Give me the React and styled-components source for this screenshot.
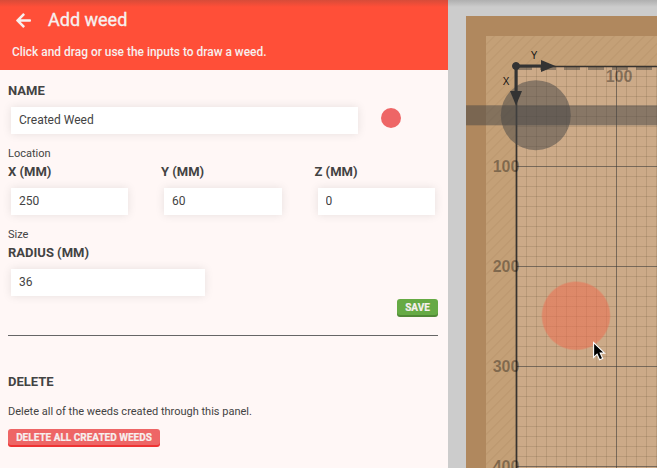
import React from "react";
import styled, { createGlobalStyle, css } from "styled-components";
import { FaArrowLeft } from "react-icons/fa";

const GlobalStyle = createGlobalStyle`
  *, *::before, *::after { box-sizing: border-box; }
  body {
    margin: 0;
    overflow: hidden;
    background: #cccccc;
    color: #434343;
    font-family: Roboto, "Liberation Sans", sans-serif;
  }
`;

const Page = styled.div`
  position: relative;
  display: flex;
  width: 657px;
  height: 468px;
  overflow: hidden;
  background: #cccccc;
`;

const TopShade = styled.div`
  position: absolute;
  inset: 0 0 auto 0;
  height: 7px;
  background: linear-gradient(rgba(60, 60, 60, 0.2), rgba(60, 60, 60, 0));
`;

const Panel = styled.section`
  display: flex;
  flex-direction: column;
  flex: 0 0 448px;
  height: 468px;
  background: #fff7f6;
`;

const PanelHeader = styled.header`
  flex: 0 0 70px;
  background: #ff4f38;
  color: #f7f0ef;
`;

const TitleRow = styled.div`
  display: flex;
  align-items: center;
  gap: 16px;
  height: 40px;
  padding-left: 15px;
`;

const BackArrow = styled(FaArrowLeft)`
  width: 17px;
  height: 17px;
`;

const Title = styled.h1`
  margin: 0;
  font-size: 18px;
  font-weight: 400;
  line-height: 24px;
  -webkit-text-stroke: 0.35px currentColor;
`;

const Hint = styled.p`
  margin: 4px 0 0 12px;
  font-size: 11.93px;
  font-weight: 500;
  line-height: 16px;
`;

const PanelBody = styled.div`
  display: flex;
  flex-direction: column;
  padding: 12px 10px 0 8px;
`;

const Label = styled.label`
  display: block;
  font-size: 13px;
  font-weight: 700;
  line-height: 18px;
  text-transform: uppercase;
`;

const GroupName = styled.span`
  display: block;
  height: 16px;
  margin-top: 12px;
  font-size: 11px;
  line-height: 16px;
`;

const Input = styled.input`
  display: block;
  width: ${(p) => p.$width}px;
  height: 27px;
  margin: 7px 0 0 3px;
  padding: 0 8px;
  border: 0;
  border-radius: 0;
  outline: 0;
  background: #fff;
  box-shadow: 0 0 10px rgba(0, 0, 0, 0.1);
  color: #434343;
  font: 400 12px/27px Roboto, "Liberation Sans", sans-serif;
`;

const NameRow = styled.div`
  display: flex;
  align-items: center;
  gap: 23px;
`;

const ColorDot = styled.span`
  width: 20px;
  height: 20px;
  margin-top: 1px;
  border-radius: 50%;
  background: #ee6666;
`;

const Columns = styled.div`
  display: grid;
  grid-template-columns: 153px 153.5px 1fr;
  margin-top: 1px;
`;

const Field = styled.div`
  margin-top: ${(p) => p.$top || 0}px;
`;

const buttonColors = {
  green: css`
    background: #66aa44;
    box-shadow: 0 2px 0 0 #518836;
  `,
  red: css`
    background: #ee6666;
    box-shadow: 0 2px 0 0 #ee3333;
  `,
};

const Button = styled.button`
  align-self: ${(p) => (p.$end ? "flex-end" : "flex-start")};
  width: ${(p) => p.$width}px;
  height: 16px;
  padding: 0;
  border: 0;
  border-radius: 3px;
  ${(p) => buttonColors[p.$color]}
  color: #f7f0ef;
  font: 700 10px/15px Roboto, "Liberation Sans", sans-serif;
  -webkit-text-stroke: 0.2px currentColor;
  text-transform: uppercase;
  white-space: nowrap;
`;

const SaveRow = styled.div`
  display: flex;
  flex-direction: column;
  margin-top: 3px;
`;

const Divider = styled.hr`
  width: 100%;
  height: 1px;
  margin: 20px 0 37px;
  border: 0;
  background: #666;
`;

const Description = styled.p`
  margin: 13px 0 9px;
  font-size: 11px;
  line-height: 16px;
`;

const MapArea = styled.main`
  flex: 1;
  padding: 16px 0 0 18px;
`;

const MapDrawing = styled.svg`
  display: block;
`;

const range = (from, to, step) => {
  const values = [];
  for (let v = from; v < to; v += step) values.push(v);
  return values;
};

function FarmMap() {
  const minorX = range(526.5, 657, 10).filter((x) => x !== 616.5);
  const minorY = range(76.5, 468, 10).filter((y) => (y - 66.5) % 100 !== 0);
  return (
    <MapDrawing width="191" height="452" viewBox="466 16 191 452">
      <defs>
        <pattern
          id="hatch"
          width="7.07"
          height="7.07"
          patternUnits="userSpaceOnUse"
          patternTransform="rotate(45)"
        >
          <rect width="1" height="7.07" fill="#6b4a20" fillOpacity="0.1" />
        </pattern>
        <radialGradient id="weed">
          <stop offset="0.95" stopColor="#ee6a4c" stopOpacity="0.52" />
          <stop offset="1" stopColor="#ee6a4c" stopOpacity="0" />
        </radialGradient>
      </defs>
      <rect x="466" y="16" width="191" height="452" fill="#b0885e" />
      <rect x="486" y="36" width="171" height="432" fill="#c4a077" />
      <rect x="486" y="36" width="171" height="432" fill="url(#hatch)" />
      <rect x="516" y="66" width="141" height="402" fill="#ccaa88" />
      <g stroke="#3d2f1c" strokeOpacity="0.14">
        {minorX.map((x) => (
          <path key={x} d={`M${x} 67V468`} />
        ))}
        {minorY.map((y) => (
          <path key={y} d={`M517 ${y}H657`} />
        ))}
      </g>
      <g stroke="#333" strokeOpacity="0.55">
        <path d="M616.5 67V468" />
        {[166.5, 266.5, 366.5, 466.5].map((y) => (
          <path key={y} d={`M517 ${y}H657`} />
        ))}
      </g>
      <path
        d="M516 68.5H657"
        stroke="#333"
        strokeOpacity="0.4"
        strokeWidth="3"
        strokeDasharray="16 8"
      />
      <path
        d="M657 66.5H516.5V468"
        fill="none"
        stroke="#222"
        strokeOpacity="0.88"
        strokeWidth="1.7"
      />
      <g
        fill="#000"
        fillOpacity="0.35"
        fontFamily="'Liberation Sans', Arial, sans-serif"
        fontSize="16"
        fontWeight="700"
        textAnchor="middle"
      >
        <text x="619" y="82">100</text>
        <text x="506" y="172">100</text>
        <text x="506" y="272">200</text>
        <text x="506" y="372">300</text>
        <text x="506" y="472">400</text>
      </g>
      <circle cx="576" cy="315.8" r="35" fill="url(#weed)" />
      <rect x="466" y="105.3" width="191" height="20" fill="#434343" fillOpacity="0.5" />
      <circle cx="535.8" cy="115.2" r="35" fill="#434343" fillOpacity="0.5" />
      <g fill="#333" stroke="#333">
        <circle cx="516" cy="66" r="3.5" />
        <path d="M516 66H542M516 66V92" strokeWidth="3" />
        <path d="M541 60 555.5 66 541 72Z" stroke="none" />
        <path d="M510 91 516 105.5 522 91Z" stroke="none" />
      </g>
      <g
        fill="#111"
        fontFamily="'Liberation Sans', Arial, sans-serif"
        fontSize="10"
        textAnchor="middle"
      >
        <text x="534" y="59">Y</text>
        <text x="506" y="85">X</text>
      </g>
      <path
        d="M593.6 342.6v14.8l3.5-3.2 2.5 5.6 3.1-1.3-2.5-5.4h4.4Z"
        fill="#000"
        stroke="#fff"
        strokeWidth="1.1"
      />
    </MapDrawing>
  );
}

export default function App() {
  return (
    <Page>
      <GlobalStyle />
      <Panel>
        <PanelHeader>
          <TitleRow>
            <BackArrow aria-label="Back" />
            <Title>Add weed</Title>
          </TitleRow>
          <Hint>Click and drag or use the inputs to draw a weed.</Hint>
        </PanelHeader>
        <PanelBody>
          <Label>Name</Label>
          <NameRow>
            <Input $width={347} defaultValue="Created Weed" />
            <ColorDot />
          </NameRow>
          <GroupName>Location</GroupName>
          <Columns>
            <Field>
              <Label>X (mm)</Label>
              <Input $width={117} defaultValue="250" />
            </Field>
            <Field>
              <Label>Y (mm)</Label>
              <Input $width={118} defaultValue="60" />
            </Field>
            <Field>
              <Label>Z (mm)</Label>
              <Input $width={117} defaultValue="0" />
            </Field>
          </Columns>
          <GroupName>Size</GroupName>
          <Field $top={1}>
            <Label>Radius (mm)</Label>
            <Input $width={194} defaultValue="36" />
          </Field>
          <SaveRow>
            <Button $color="green" $width={41} $end>
              Save
            </Button>
          </SaveRow>
          <Divider />
          <Label>Delete</Label>
          <Description>
            Delete all of the weeds created through this panel.
          </Description>
          <Button $color="red" $width={152}>
            Delete all created weeds
          </Button>
        </PanelBody>
      </Panel>
      <MapArea>
        <FarmMap />
      </MapArea>
      <TopShade />
    </Page>
  );
}
